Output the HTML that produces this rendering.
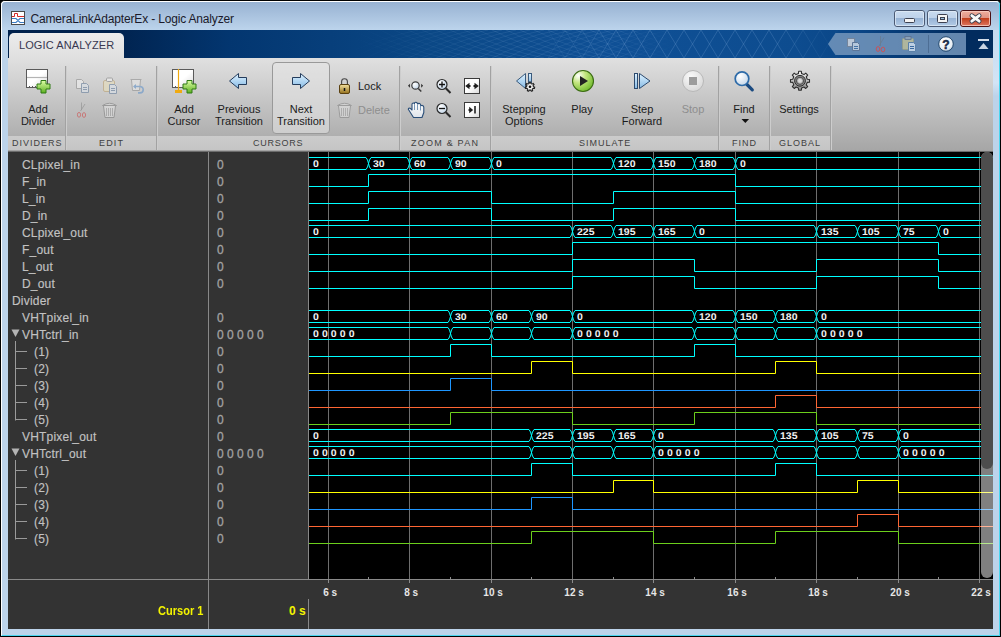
<!DOCTYPE html>
<html><head><meta charset="utf-8">
<style>
*{margin:0;padding:0;box-sizing:border-box}
html,body{width:1001px;height:637px;overflow:hidden;background:#000}
body{position:relative;font-family:"Liberation Sans",sans-serif}
.abs{position:absolute}
#frame{position:absolute;left:0;top:0;width:1001px;height:637px;background:#bcd3ea;border-radius:5px 5px 0 0;
  border-left:1px solid #000;border-top:1px solid #000;border-right:1px solid #000;border-bottom:1px solid #000}
#frame-in{position:absolute;left:0;top:0;right:0;bottom:0;border-left:1px solid #fff;border-top:1px solid #fff;border-right:1px solid #4ad6f0;border-bottom:1px solid #4ad6f0;border-radius:4px 4px 0 0}
#titlebar{position:absolute;left:2px;top:2px;width:997px;height:28px;background:linear-gradient(#98b2d2,#bcd4ec);border-radius:4px 4px 0 0}
#title{position:absolute;left:30.5px;top:12px;font-size:12px;letter-spacing:-0.17px;color:#1a1a2a;white-space:nowrap}
#ribbon{position:absolute;left:8px;top:30px;width:985px;height:28px;background:linear-gradient(90deg,#00214c 0%,#00234f 11%,#033670 22.5%,#0b4886 43%,#0f5096 61%,#0d4c8f 80%,#0a4687 86%,#022c5e 97%);overflow:hidden}
#tab{position:absolute;left:9px;top:33px;width:115px;height:25px;background:linear-gradient(#ececec,#e0e0e0);border-radius:5px 5px 0 0}
#tab span{position:absolute;left:10px;top:6px;font-size:11px;letter-spacing:0.1px;color:#383850;white-space:nowrap}
#toolbar{position:absolute;left:8px;top:58px;width:985px;height:94px;background:linear-gradient(#e0e0e0,#a5a5a5)}
#tb-sec{position:absolute;left:8px;top:58px;width:822px;height:78px;background:linear-gradient(#e3e3e3,#bdbdbd)}
#band{position:absolute;left:8px;top:136px;width:822px;height:14px;background:linear-gradient(#cccccc,#c5c5c5)}
.sep{position:absolute;top:66px;width:2px;height:84px;border-left:1px solid #a2a2a2;border-right:1px solid #cdcdcd}
.lbl{position:absolute;top:137.5px;font-size:9px;letter-spacing:1px;color:#404040;white-space:nowrap}
.btxt{position:absolute;font-size:11px;color:#1b1b1b;text-align:center;line-height:12px;white-space:nowrap}
.dis{color:#8e8e8e}
#panel{position:absolute;left:8px;top:152px;width:985px;height:477px;background:#333333}
#wave{position:absolute;left:309px;top:152px;width:684px;height:427px;background:#000}
.nm{position:absolute;font-size:12px;letter-spacing:0.2px;color:#c2c2c2;-webkit-text-stroke:0.15px #c2c2c2;white-space:nowrap;line-height:14px}
.vl{position:absolute;left:217px;font-size:12px;color:#a2a2a2;-webkit-text-stroke:0.3px #a2a2a2;white-space:nowrap;line-height:14px}
svg{position:absolute;left:0;top:0}
</style></head><body>
<div id="frame"><div id="frame-in"></div></div>
<div id="titlebar"></div>
<div class="abs" style="left:993px;top:30px;width:6px;height:66px;background:linear-gradient(#c4daf0,#d2e4f6 80%,#bcd3ea)"></div>
<div id="title">CameraLinkAdapterEx - Logic Analyzer</div>
<div id="ribbon"><svg width="985" height="28" style="position:absolute;left:0;top:0"><defs><linearGradient id="rm" x1="0" x2="985" gradientUnits="userSpaceOnUse"><stop offset="0.52" stop-color="#fff" stop-opacity="0"/><stop offset="0.62" stop-color="#fff" stop-opacity="1"/><stop offset="0.78" stop-color="#fff" stop-opacity="1"/><stop offset="0.85" stop-color="#fff" stop-opacity="0"/></linearGradient><linearGradient id="rm2" x1="0" x2="985" gradientUnits="userSpaceOnUse"><stop offset="0.34" stop-color="#fff" stop-opacity="0"/><stop offset="0.50" stop-color="#fff" stop-opacity="1"/><stop offset="0.60" stop-color="#fff" stop-opacity="1"/><stop offset="0.68" stop-color="#fff" stop-opacity="0"/></linearGradient><mask id="rmask"><rect width="985" height="28" fill="url(#rm)"/></mask><mask id="rmask2"><rect width="985" height="28" fill="url(#rm2)"/></mask></defs><g mask="url(#rmask)" stroke="#b0d0f8" stroke-opacity="0.20" stroke-width="0.9" fill="none"><path d="M540,28 L557,0" /><path d="M540,0 L557,28" /><path d="M557,28 L574,0" /><path d="M557,0 L574,28" /><path d="M574,28 L591,0" /><path d="M574,0 L591,28" /><path d="M591,28 L608,0" /><path d="M591,0 L608,28" /><path d="M608,28 L625,0" /><path d="M608,0 L625,28" /><path d="M625,28 L642,0" /><path d="M625,0 L642,28" /><path d="M642,28 L659,0" /><path d="M642,0 L659,28" /><path d="M659,28 L676,0" /><path d="M659,0 L676,28" /><path d="M676,28 L693,0" /><path d="M676,0 L693,28" /><path d="M693,28 L710,0" /><path d="M693,0 L710,28" /><path d="M710,28 L727,0" /><path d="M710,0 L727,28" /><path d="M727,28 L744,0" /><path d="M727,0 L744,28" /><path d="M744,28 L761,0" /><path d="M744,0 L761,28" /><path d="M761,28 L778,0" /><path d="M761,0 L778,28" /><path d="M778,28 L795,0" /><path d="M778,0 L795,28" /><path d="M795,28 L812,0" /><path d="M795,0 L812,28" /><path d="M812,28 L829,0" /><path d="M812,0 L829,28" /><path d="M829,28 L846,0" /><path d="M829,0 L846,28" /><path d="M846,28 L863,0" /><path d="M846,0 L863,28" /></g><g mask="url(#rmask2)" stroke="#b0d0f8" stroke-opacity="0.12" stroke-width="0.8" fill="none"><path d="M330,28 Q370,8 410,0" /><path d="M330,0 Q370,20 410,28" /><path d="M344,28 Q384,8 424,0" /><path d="M344,0 Q384,20 424,28" /><path d="M358,28 Q398,8 438,0" /><path d="M358,0 Q398,20 438,28" /><path d="M372,28 Q412,8 452,0" /><path d="M372,0 Q412,20 452,28" /><path d="M386,28 Q426,8 466,0" /><path d="M386,0 Q426,20 466,28" /><path d="M400,28 Q440,8 480,0" /><path d="M400,0 Q440,20 480,28" /><path d="M414,28 Q454,8 494,0" /><path d="M414,0 Q454,20 494,28" /><path d="M428,28 Q468,8 508,0" /><path d="M428,0 Q468,20 508,28" /><path d="M442,28 Q482,8 522,0" /><path d="M442,0 Q482,20 522,28" /><path d="M456,28 Q496,8 536,0" /><path d="M456,0 Q496,20 536,28" /><path d="M470,28 Q510,8 550,0" /><path d="M470,0 Q510,20 550,28" /><path d="M484,28 Q524,8 564,0" /><path d="M484,0 Q524,20 564,28" /><path d="M498,28 Q538,8 578,0" /><path d="M498,0 Q538,20 578,28" /><path d="M512,28 Q552,8 592,0" /><path d="M512,0 Q552,20 592,28" /><path d="M526,28 Q566,8 606,0" /><path d="M526,0 Q566,20 606,28" /><path d="M540,28 Q580,8 620,0" /><path d="M540,0 Q580,20 620,28" /><path d="M554,28 Q594,8 634,0" /><path d="M554,0 Q594,20 634,28" /><path d="M568,28 Q608,8 648,0" /><path d="M568,0 Q608,20 648,28" /><path d="M582,28 Q622,8 662,0" /><path d="M582,0 Q622,20 662,28" /><path d="M596,28 Q636,8 676,0" /><path d="M596,0 Q636,20 676,28" /><path d="M610,28 Q650,8 690,0" /><path d="M610,0 Q650,20 690,28" /><path d="M624,28 Q664,8 704,0" /><path d="M624,0 Q664,20 704,28" /><path d="M638,28 Q678,8 718,0" /><path d="M638,0 Q678,20 718,28" /><path d="M652,28 Q692,8 732,0" /><path d="M652,0 Q692,20 732,28" /><path d="M666,28 Q706,8 746,0" /><path d="M666,0 Q706,20 746,28" /><path d="M680,28 Q720,8 760,0" /><path d="M680,0 Q720,20 760,28" /><path d="M694,28 Q734,8 774,0" /><path d="M694,0 Q734,20 774,28" /><path d="M708,28 Q748,8 788,0" /><path d="M708,0 Q748,20 788,28" /><path d="M722,28 Q762,8 802,0" /><path d="M722,0 Q762,20 802,28" /><path d="M736,28 Q776,8 816,0" /><path d="M736,0 Q776,20 816,28" /></g></svg></div>
<div id="tab"><span>LOGIC ANALYZER</span></div>
<div id="toolbar"></div>
<div id="band"></div>
<div class="sep" style="left:65px"></div>
<div class="sep" style="left:156px"></div>
<div class="sep" style="left:399px"></div>
<div class="sep" style="left:490px"></div>
<div class="sep" style="left:718px"></div>
<div class="sep" style="left:769px"></div>
<div class="sep" style="left:830px"></div>
<svg width="1001" height="637" style="position:absolute;left:0;top:0">
<defs>
<linearGradient id="gGreen" x1="0" y1="0" x2="0" y2="1"><stop offset="0" stop-color="#e0ffa8"/><stop offset="1" stop-color="#5cb020"/></linearGradient>
<linearGradient id="gBox" x1="0" y1="0" x2="1" y2="1"><stop offset="0.5" stop-color="#ffffff"/><stop offset="1" stop-color="#d8d8d8"/></linearGradient>
<linearGradient id="gArrow" x1="0" y1="0" x2="0" y2="1"><stop offset="0" stop-color="#dff2ff"/><stop offset="1" stop-color="#86bbe6"/></linearGradient>
<linearGradient id="gGold" x1="0" y1="0" x2="0" y2="1"><stop offset="0" stop-color="#f4e2a0"/><stop offset="1" stop-color="#94701c"/></linearGradient>
<radialGradient id="gPlay" cx="0.28" cy="0.25" r="0.85"><stop offset="0" stop-color="#ffffff"/><stop offset="0.4" stop-color="#c4e680"/><stop offset="1" stop-color="#6cb828"/></radialGradient>
<radialGradient id="gStop" cx="0.4" cy="0.3" r="0.8"><stop offset="0" stop-color="#fafafa"/><stop offset="1" stop-color="#d4d4d4"/></radialGradient>
<radialGradient id="gLens" cx="0.35" cy="0.3" r="0.8"><stop offset="0" stop-color="#ffffff"/><stop offset="1" stop-color="#c0d4e8"/></radialGradient>
<radialGradient id="gHelp" cx="0.4" cy="0.3" r="0.8"><stop offset="0" stop-color="#ffffff"/><stop offset="0.7" stop-color="#e8eef4"/><stop offset="1" stop-color="#9fb4c8"/></radialGradient>
<linearGradient id="gMin" x1="0" y1="0" x2="0" y2="1"><stop offset="0" stop-color="#cadcf0"/><stop offset="0.47" stop-color="#bed2ea"/><stop offset="0.5" stop-color="#98b4d6"/><stop offset="1" stop-color="#b4cce6"/></linearGradient>
<linearGradient id="gClose" x1="0" y1="0" x2="0" y2="1"><stop offset="0" stop-color="#f0b0a0"/><stop offset="0.47" stop-color="#e09484"/><stop offset="0.5" stop-color="#c2401e"/><stop offset="1" stop-color="#e07a64"/></linearGradient>
<linearGradient id="gGear" x1="0" y1="0" x2="0" y2="1"><stop offset="0" stop-color="#f4f4f4"/><stop offset="1" stop-color="#8a8a8a"/></linearGradient>
<linearGradient id="gHand" x1="0" y1="0" x2="0" y2="1"><stop offset="0" stop-color="#ffffff"/><stop offset="1" stop-color="#dfe4ea"/></linearGradient>
</defs>
<!-- title icon -->
<rect x="11.5" y="11.5" width="13" height="13" fill="#fff" stroke="#4a4a4a"/>
<path d="M12,16.5 H14.5 V13.5 H17.5 V16.5 H24" fill="none" stroke="#d42a2a"/>
<path d="M12,18.5 H16 L18,20.5 L20,18.5 H24 M12,22.5 H16 L18,20.5 L20,22.5 H24" fill="none" stroke="#3a7cc4" stroke-width="1.1"/>
<!-- window buttons -->
<rect x="894.5" y="10.5" width="30" height="16" rx="2.5" fill="url(#gMin)" stroke="#4b5a74"/>
<rect x="895.5" y="11.5" width="28" height="14" rx="1.5" fill="none" stroke="#e4eef8" stroke-opacity="0.7"/>
<rect x="904.5" y="18.5" width="10" height="4" rx="1" fill="#f4f4f4" stroke="#3c4050"/>
<rect x="927.5" y="10.5" width="30" height="16" rx="2.5" fill="url(#gMin)" stroke="#4b5a74"/>
<rect x="928.5" y="11.5" width="28" height="14" rx="1.5" fill="none" stroke="#e4eef8" stroke-opacity="0.7"/>
<rect x="937.5" y="14.5" width="10" height="8" rx="1" fill="#f4f4f4" stroke="#3c4050"/>
<rect x="940.5" y="17.5" width="4" height="2" fill="#9cc0dc" stroke="#3c4050"/>
<rect x="960.5" y="10.5" width="30" height="16" rx="2.5" fill="url(#gClose)" stroke="#4a1014"/>
<rect x="961.5" y="11.5" width="28" height="14" rx="1.5" fill="none" stroke="#f8d0c4" stroke-opacity="0.8"/>
<path d="M971.8,15.6 L979.2,21.2 M979.2,15.6 L971.8,21.2" stroke="#3a4050" stroke-width="4.6" stroke-linecap="round"/>
<path d="M971.8,15.6 L979.2,21.2 M979.2,15.6 L971.8,21.2" stroke="#f8f8f8" stroke-width="2.8" stroke-linecap="round"/>
<!-- QAT -->
<path d="M828,44 L835.5,33 H966 V55 H835.5 Z" fill="#7496bc" fill-opacity="0.85"/>
<g opacity="0.75">
<rect x="847.5" y="38.5" width="7" height="8" fill="#d8dde4" stroke="#7a8494"/>
<path d="M852.5,42.5 h5 l2,2 v6 h-7 z" fill="#d0dce8" stroke="#5a7090"/>
<path d="M854,46.5 h4 M854,48.5 h4" stroke="#3a6aa0"/>
</g>
<path d="M884,37.5 L879,46 M880.5,36 V46" stroke="#6a7c90" stroke-width="0.8"/>
<ellipse cx="878" cy="49" rx="1.8" ry="2.4" fill="none" stroke="#c8545a"/>
<ellipse cx="883" cy="49.5" rx="1.8" ry="2.4" fill="none" stroke="#c8545a"/>
<rect x="902.5" y="38.5" width="11" height="11" rx="1" fill="#b8bc9c" stroke="#98a088" opacity="0.9"/>
<rect x="905" y="36.5" width="6" height="3" fill="#8aa0b8" stroke="#5a7090" stroke-width="0.8"/>
<path d="M908.5,42.5 h5 l2,2 v7 h-7 z" fill="#bcd0e4" stroke="#5a80a8"/>
<path d="M910,46.5 h4 M910,48.5 h4" stroke="#3a6aa0"/>
<path d="M928.5,35 V53" stroke="#4d6e94"/>
<circle cx="946" cy="44" r="7.3" fill="url(#gHelp)" stroke="#22486e"/>
<text x="946" y="48.5" text-anchor="middle" font-family="Liberation Sans" font-weight="bold" font-size="12" fill="#1a2a48" stroke="#1a2a48" stroke-width="0.5">?</text>
<!-- collapse -->
<rect x="978" y="39" width="11" height="2" fill="#d4dde8"/>
<path d="M978.5,49 L983.5,43 L988.5,49 Z" fill="#c8d4e2"/>

<!-- Add divider -->
<rect x="26.5" y="69.5" width="21" height="18" fill="url(#gBox)" stroke="#5a5a5a"/>
<path d="M27,77.5 H47" stroke="#b4b4b4" stroke-width="1.2"/>
<path d="M29.5,86 v1 M32.5,86 v1 M35.5,86 v1" stroke="#5a5a5a"/>
<path d="M41,80.5 h5 v3.5 h4 v5 h-4 v4 h-5 v-4 h-4 v-5 h4 z" fill="url(#gGreen)" stroke="#2e7a14"/>
<!-- edit icons (disabled) -->
<g opacity="0.55">
<path d="M76.5,79.5 h5 l2,2 v7 h-7 z" fill="#f2f2f2" stroke="#8a8a8a"/>
<path d="M81.5,83.5 h5 l2,2 v7 h-7 z" fill="#dde4ec" stroke="#5e7898"/>
<path d="M83,87.5 h4 M83,89.5 h4" stroke="#5e7898"/>
<rect x="103.5" y="80.5" width="11" height="11" rx="1.5" fill="#eae0b8" stroke="#b89c68"/>
<rect x="106.5" y="78" width="6" height="3.5" rx="1" fill="#f4f4f4" stroke="#7a7a7a"/>
<path d="M109.5,84.5 h5 l2,2 v7 h-7 z" fill="#dde4ec" stroke="#5e7898"/>
<path d="M111,88.5 h4 M111,90.5 h4" stroke="#5e7898"/>
<path d="M130.5,79.5 h11 M131.5,80 l1,10.5 h7 l1,-10.5" fill="#e8e8e8" stroke="#8a8a8a"/>
<path d="M134,86.5 h6 a3.2,3.2 0 0 1 0,6.4 h-2" fill="none" stroke="#5a8ec8" stroke-width="1.6"/>
<path d="M133,86.5 l3,-2.5 v5 z" fill="#5a8ec8"/>
<path d="M81.5,102.5 V110 M85,104 L80.5,111" stroke="#7a7a7a" stroke-width="0.8"/>
<ellipse cx="79" cy="114.8" rx="1.6" ry="2.4" fill="none" stroke="#d04040"/>
<ellipse cx="84" cy="115" rx="1.6" ry="2.4" fill="none" stroke="#d04040"/>
<path d="M102.5,105.5 Q109.5,101 116.5,105.5 Z" fill="#e0e0e0" stroke="#7a7a7a"/>
<path d="M103.5,106 l1.5,11.5 h9 l1.5,-11.5" fill="#e4e4e4" stroke="#7a7a7a"/>
<path d="M106.5,108 v8 M108.5,108 v8 M110.5,108 v8 M112.5,108 v8" stroke="#8a8a8a" stroke-width="0.8"/>
</g>
<!-- Add cursor -->
<rect x="172.5" y="69.5" width="21" height="18" fill="url(#gBox)" stroke="#5a5a5a"/>
<path d="M175.5,86 v1 M189.5,86 v1" stroke="#5a5a5a"/>
<path d="M178.5,69 V90" stroke="#f0aa10" stroke-width="1.2"/>
<rect x="175" y="90" width="7" height="3" fill="#f0aa10"/>
<path d="M187,80.5 h5 v3.5 h4 v5 h-4 v4 h-5 v-4 h-4 v-5 h4 z" fill="url(#gGreen)" stroke="#2e7a14"/>
<!-- prev / next arrows -->
<path d="M229.5,81 L238.5,73.5 V77.5 H246.5 V84.5 H238.5 V88.5 Z" fill="url(#gArrow)" stroke="#243c5c" stroke-linejoin="miter"/>
<rect x="272.5" y="62.5" width="57" height="71" rx="3.5" fill="#e6e6e6" fill-opacity="0.55" stroke="#999"/>
<path d="M309.5,81 L300.5,73.5 V77.5 H292.5 V84.5 H300.5 V88.5 Z" fill="url(#gArrow)" stroke="#243c5c"/>
<!-- lock -->
<path d="M341.6,84.5 V81.6 a2.9,2.9 0 0 1 5.8,0 V84.5" fill="none" stroke="#454545" stroke-width="1.1"/>
<rect x="339.5" y="84.5" width="10" height="9" rx="1.5" fill="url(#gGold)" stroke="#5a4010"/>
<path d="M344.5,88 v3" stroke="#111" stroke-width="1.5"/>
<!-- delete disabled -->
<g opacity="0.5">
<path d="M337.5,105.5 Q344.5,101 351.5,105.5 Z" fill="#e0e0e0" stroke="#7a7a7a"/>
<path d="M338.5,106 l1.5,11.5 h9 l1.5,-11.5" fill="#e4e4e4" stroke="#7a7a7a"/>
<path d="M341.5,108 v8 M343.5,108 v8 M345.5,108 v8 M347.5,108 v8" stroke="#8a8a8a" stroke-width="0.8"/>
</g>
<!-- zoom x -->
<circle cx="415.5" cy="85.5" r="3.7" fill="url(#gLens)" stroke="#3e3e3e" stroke-width="1.2"/>
<path d="M418.3,88.5 L421.3,91.6" stroke="#3a3a3a" stroke-width="1.5"/>
<path d="M408,85.7 L409.9,83.7 V87.7 Z M423.1,85.7 L421.2,83.7 V87.7 Z" fill="#2a2a2a"/>
<!-- zoom in -->
<circle cx="442" cy="84.5" r="5" fill="url(#gLens)" stroke="#2a2a2a" stroke-width="1.2"/>
<path d="M445.8,88.3 L450.5,93" stroke="#2a2a2a" stroke-width="2"/>
<path d="M439,84.5 h6 M442,81.5 v6" stroke="#111" stroke-width="1.3"/>
<!-- fit -->
<rect x="464.5" y="78.5" width="15" height="15" fill="url(#gBox)" stroke="#3a3a3a"/>
<path d="M465.2,86 L469.5,82.8 V89.2 Z M478.8,86 L474.5,82.8 V89.2 Z" fill="#1e1e1e"/>
<path d="M468,86 h2.5 M473.5,86 h2.5" stroke="#1e1e1e" stroke-width="1.8"/>
<!-- hand -->
<path d="M413.5,117.5 L408.3,109.3 Q408.5,107.9 410,108.2 L412,110 V104.5 Q412,102.8 413.5,103 Q414.3,103.2 414.5,104 V102.8 Q415.5,101.8 416.7,102.5 Q417.3,103 417.5,104 Q418.5,103 419.8,103.5 L420.5,104.5 V105.8 Q421.8,105 423,105.7 Q423.8,106.3 423.8,107.5 V112.5 L422,117.5 Z" fill="url(#gHand)" stroke="#2a4e78" stroke-width="1.1" stroke-linejoin="round"/>
<path d="M414.5,104.5 V110 M417.5,104.5 V110 M420.5,105.5 V110.5" stroke="#6a8cb0" stroke-width="0.9"/>
<!-- zoom out -->
<circle cx="442" cy="108.5" r="5" fill="url(#gLens)" stroke="#2a2a2a" stroke-width="1.2"/>
<path d="M445.8,112.3 L450.5,117" stroke="#2a2a2a" stroke-width="2"/>
<path d="M439,108.5 h6" stroke="#111" stroke-width="1.3"/>
<!-- fit end -->
<rect x="464.5" y="102.5" width="15" height="15" fill="url(#gBox)" stroke="#3a3a3a"/>
<path d="M468.5,110 h2.5" stroke="#1e1e1e" stroke-width="1.8"/>
<path d="M473.2,110 L469.2,106.8 V113.2 Z" fill="#1e1e1e"/>
<path d="M475,106 V113.6" stroke="#1e1e1e" stroke-width="1.6"/>
<!-- stepping options -->
<path d="M516.5,81 L525.5,73.5 V88.5 Z" fill="url(#gArrow)" stroke="#3a5a7c"/>
<rect x="528.5" y="73.5" width="3" height="9" fill="url(#gArrow)" stroke="#3a5a7c"/>
<path d="M529.17,83.50 L529.26,82.16 L530.74,82.16 L530.83,83.50 L532.06,84.09 L533.17,83.33 L534.09,84.48 L533.10,85.39 L533.40,86.72 L534.69,87.12 L534.36,88.55 L533.03,88.34 L532.18,89.41 L532.68,90.66 L531.35,91.30 L530.68,90.13 L529.32,90.13 L528.65,91.30 L527.32,90.66 L527.82,89.41 L526.97,88.34 L525.64,88.55 L525.31,87.12 L526.60,86.72 L526.90,85.39 L525.91,84.48 L526.83,83.33 L527.94,84.09 Z" fill="#f0f0f0" stroke="#222" stroke-width="1.1" stroke-linejoin="round"/>
<circle cx="530" cy="86.8" r="1.3" fill="#111"/>
<!-- play -->
<circle cx="583" cy="81" r="10.5" fill="url(#gPlay)" stroke="#3c6c14" stroke-width="1.1"/>
<path d="M580,76 L588,81 L580,86 Z" fill="#222"/>
<!-- step forward -->
<rect x="634.5" y="73.5" width="3" height="15" fill="url(#gArrow)" stroke="#2c4a6e"/>
<path d="M639.5,73.5 L650,81 L639.5,88.5 Z" fill="url(#gArrow)" stroke="#2c4a6e"/>
<!-- stop -->
<circle cx="693" cy="81" r="10.5" fill="url(#gStop)" stroke="#b8b8b8"/>
<rect x="689" y="77" width="8" height="8" fill="#9c9c9c"/>
<!-- find -->
<path d="M746.5,84 L752.3,89.8" stroke="#1a4a80" stroke-width="3.2" stroke-linecap="round"/>
<circle cx="742" cy="78.7" r="6.8" fill="url(#gLens)" stroke="#2c6aa8" stroke-width="1.7"/>
<path d="M745.3,123 l-3.8,-4 h7.6 z" fill="#111"/>
<!-- settings -->
<path d="M798.41,73.57 L798.65,71.30 L801.35,71.30 L801.59,73.57 L803.99,74.57 L805.76,73.12 L807.68,75.04 L806.23,76.81 L807.23,79.21 L809.50,79.45 L809.50,82.15 L807.23,82.39 L806.23,84.79 L807.68,86.56 L805.76,88.48 L803.99,87.03 L801.59,88.03 L801.35,90.30 L798.65,90.30 L798.41,88.03 L796.01,87.03 L794.24,88.48 L792.32,86.56 L793.77,84.79 L792.77,82.39 L790.50,82.15 L790.50,79.45 L792.77,79.21 L793.77,76.81 L792.32,75.04 L794.24,73.12 L796.01,74.57 Z" fill="url(#gGear)" stroke="#2e2e2e" stroke-width="1.1" stroke-linejoin="round"/>
<circle cx="800" cy="80.8" r="5.4" fill="#8a8a8a" stroke="#2a2a2a" stroke-width="1"/>
<circle cx="800" cy="80.8" r="3.6" fill="#b0b0b0" stroke="#4a4a4a" stroke-width="1"/>
<circle cx="800" cy="80.8" r="2" fill="#dcdcdc"/>
</svg>

<div class="lbl" style="left:12px">DIVIDERS</div>
<div class="lbl" style="left:99px;letter-spacing:1.15px">EDIT</div>
<div class="lbl" style="left:253px;letter-spacing:0.77px">CURSORS</div>
<div class="lbl" style="left:411px;letter-spacing:1.23px">ZOOM &amp; PAN</div>
<div class="lbl" style="left:579px">SIMULATE</div>
<div class="lbl" style="left:732px">FIND</div>
<div class="lbl" style="left:779px">GLOBAL</div>

<div class="btxt" style="left:15px;top:103px;width:46px">Add<br>Divider</div>
<div class="btxt" style="left:160px;top:103px;width:48px">Add<br>Cursor</div>
<div class="btxt" style="left:211px;top:103px;width:56px">Previous<br>Transition</div>
<div class="btxt" style="left:272px;top:103px;width:58px">Next<br>Transition</div>
<div class="btxt" style="left:358px;top:80px">Lock</div>
<div class="btxt dis" style="left:358px;top:104px">Delete</div>
<div class="btxt" style="left:496px;top:103px;width:56px">Stepping<br>Options</div>
<div class="btxt" style="left:562px;top:103px;width:40px">Play</div>
<div class="btxt" style="left:614px;top:103px;width:56px">Step<br>Forward</div>
<div class="btxt dis" style="left:673px;top:103px;width:40px">Stop</div>
<div class="btxt" style="left:724px;top:103px;width:40px">Find</div>
<div class="btxt" style="left:774px;top:103px;width:50px">Settings</div>

<div id="panel"></div>
<div class="abs" style="left:8px;top:150px;width:985px;height:1px;background:#a4a4a4"></div>
<div class="abs" style="left:8px;top:151px;width:985px;height:1px;background:#6c6c6c"></div>
<div id="wave"></div>
<svg width="1001" height="637" style="shape-rendering:crispEdges">
<g fill="none" stroke-width="1">
<path d="M328.5,152 V579" stroke="#6e6e6e"/>
<path d="M409.5,152 V579" stroke="#6e6e6e"/>
<path d="M491.5,152 V579" stroke="#6e6e6e"/>
<path d="M572.5,152 V579" stroke="#6e6e6e"/>
<path d="M653.5,152 V579" stroke="#6e6e6e"/>
<path d="M735.5,152 V579" stroke="#6e6e6e"/>
<path d="M816.5,152 V579" stroke="#6e6e6e"/>
<path d="M898.5,152 V579" stroke="#6e6e6e"/>
<path d="M979.5,152 V579" stroke="#6e6e6e"/>
</g>
</svg>
<svg width="1001" height="637">
<g fill="none" stroke-width="1" font-family="Liberation Sans" font-size="10" font-weight="bold" style="fill:none">
<path d="M309,157.5 H366 M309,169.5 H366" stroke="#00ffff"/>
<text transform="translate(313,167) scale(1.05,0.97)" font-size="10" text-rendering="geometricPrecision" fill="#f0f0f0" stroke="none" xml:space="preserve">0</text>
<path d="M371,157.5 H407 M371,169.5 H407" stroke="#00ffff"/>
<text transform="translate(373,167) scale(1.05,0.97)" font-size="10" text-rendering="geometricPrecision" fill="#f0f0f0" stroke="none" xml:space="preserve">30</text>
<path d="M412,157.5 H448 M412,169.5 H448" stroke="#00ffff"/>
<text transform="translate(414,167) scale(1.05,0.97)" font-size="10" text-rendering="geometricPrecision" fill="#f0f0f0" stroke="none" xml:space="preserve">60</text>
<path d="M453,157.5 H489 M453,169.5 H489" stroke="#00ffff"/>
<text transform="translate(455,167) scale(1.05,0.97)" font-size="10" text-rendering="geometricPrecision" fill="#f0f0f0" stroke="none" xml:space="preserve">90</text>
<path d="M494,157.5 H611 M494,169.5 H611" stroke="#00ffff"/>
<text transform="translate(496,167) scale(1.05,0.97)" font-size="10" text-rendering="geometricPrecision" fill="#f0f0f0" stroke="none" xml:space="preserve">0</text>
<path d="M616,157.5 H651 M616,169.5 H651" stroke="#00ffff"/>
<text transform="translate(618,167) scale(1.05,0.97)" font-size="10" text-rendering="geometricPrecision" fill="#f0f0f0" stroke="none" xml:space="preserve">120</text>
<path d="M656,157.5 H692 M656,169.5 H692" stroke="#00ffff"/>
<text transform="translate(658,167) scale(1.05,0.97)" font-size="10" text-rendering="geometricPrecision" fill="#f0f0f0" stroke="none" xml:space="preserve">150</text>
<path d="M697,157.5 H733 M697,169.5 H733" stroke="#00ffff"/>
<text transform="translate(699,167) scale(1.05,0.97)" font-size="10" text-rendering="geometricPrecision" fill="#f0f0f0" stroke="none" xml:space="preserve">180</text>
<path d="M738,157.5 H993 M738,169.5 H993" stroke="#00ffff"/>
<text transform="translate(740,167) scale(1.05,0.97)" font-size="10" text-rendering="geometricPrecision" fill="#f0f0f0" stroke="none" xml:space="preserve">0</text>
<path d="M366,157.5 L367.5,160 L369.5,167 L371,169.5 M371,157.5 L369.5,160 L367.5,167 L366,169.5" stroke="#00ffff"/>
<path d="M407,157.5 L408.5,160 L410.5,167 L412,169.5 M412,157.5 L410.5,160 L408.5,167 L407,169.5" stroke="#00ffff"/>
<path d="M448,157.5 L449.5,160 L451.5,167 L453,169.5 M453,157.5 L451.5,160 L449.5,167 L448,169.5" stroke="#00ffff"/>
<path d="M489,157.5 L490.5,160 L492.5,167 L494,169.5 M494,157.5 L492.5,160 L490.5,167 L489,169.5" stroke="#00ffff"/>
<path d="M611,157.5 L612.5,160 L614.5,167 L616,169.5 M616,157.5 L614.5,160 L612.5,167 L611,169.5" stroke="#00ffff"/>
<path d="M651,157.5 L652.5,160 L654.5,167 L656,169.5 M656,157.5 L654.5,160 L652.5,167 L651,169.5" stroke="#00ffff"/>
<path d="M692,157.5 L693.5,160 L695.5,167 L697,169.5 M697,157.5 L695.5,160 L693.5,167 L692,169.5" stroke="#00ffff"/>
<path d="M733,157.5 L734.5,160 L736.5,167 L738,169.5 M738,157.5 L736.5,160 L734.5,167 L733,169.5" stroke="#00ffff"/>
<polyline points="309,186.5 368.5,186.5 368.5,174.5 735.5,174.5 735.5,186.5 993,186.5" stroke="#00ffff"/>
<polyline points="309,203.5 368.5,203.5 368.5,191.5 491.5,191.5 491.5,203.5 613.5,203.5 613.5,191.5 735.5,191.5 735.5,203.5 993,203.5" stroke="#00ffff"/>
<polyline points="309,220.5 368.5,220.5 368.5,208.5 491.5,208.5 491.5,220.5 613.5,220.5 613.5,208.5 735.5,208.5 735.5,220.5 993,220.5" stroke="#00ffff"/>
<path d="M309,225.5 H570 M309,237.5 H570" stroke="#00ffff"/>
<text transform="translate(313,235) scale(1.05,0.97)" font-size="10" text-rendering="geometricPrecision" fill="#f0f0f0" stroke="none" xml:space="preserve">0</text>
<path d="M575,225.5 H611 M575,237.5 H611" stroke="#00ffff"/>
<text transform="translate(577,235) scale(1.05,0.97)" font-size="10" text-rendering="geometricPrecision" fill="#f0f0f0" stroke="none" xml:space="preserve">225</text>
<path d="M616,225.5 H651 M616,237.5 H651" stroke="#00ffff"/>
<text transform="translate(618,235) scale(1.05,0.97)" font-size="10" text-rendering="geometricPrecision" fill="#f0f0f0" stroke="none" xml:space="preserve">195</text>
<path d="M656,225.5 H692 M656,237.5 H692" stroke="#00ffff"/>
<text transform="translate(658,235) scale(1.05,0.97)" font-size="10" text-rendering="geometricPrecision" fill="#f0f0f0" stroke="none" xml:space="preserve">165</text>
<path d="M697,225.5 H814 M697,237.5 H814" stroke="#00ffff"/>
<text transform="translate(699,235) scale(1.05,0.97)" font-size="10" text-rendering="geometricPrecision" fill="#f0f0f0" stroke="none" xml:space="preserve">0</text>
<path d="M819,225.5 H855 M819,237.5 H855" stroke="#00ffff"/>
<text transform="translate(821,235) scale(1.05,0.97)" font-size="10" text-rendering="geometricPrecision" fill="#f0f0f0" stroke="none" xml:space="preserve">135</text>
<path d="M860,225.5 H896 M860,237.5 H896" stroke="#00ffff"/>
<text transform="translate(862,235) scale(1.05,0.97)" font-size="10" text-rendering="geometricPrecision" fill="#f0f0f0" stroke="none" xml:space="preserve">105</text>
<path d="M901,225.5 H936 M901,237.5 H936" stroke="#00ffff"/>
<text transform="translate(903,235) scale(1.05,0.97)" font-size="10" text-rendering="geometricPrecision" fill="#f0f0f0" stroke="none" xml:space="preserve">75</text>
<path d="M941,225.5 H993 M941,237.5 H993" stroke="#00ffff"/>
<text transform="translate(943,235) scale(1.05,0.97)" font-size="10" text-rendering="geometricPrecision" fill="#f0f0f0" stroke="none" xml:space="preserve">0</text>
<path d="M570,225.5 L571.5,228 L573.5,235 L575,237.5 M575,225.5 L573.5,228 L571.5,235 L570,237.5" stroke="#00ffff"/>
<path d="M611,225.5 L612.5,228 L614.5,235 L616,237.5 M616,225.5 L614.5,228 L612.5,235 L611,237.5" stroke="#00ffff"/>
<path d="M651,225.5 L652.5,228 L654.5,235 L656,237.5 M656,225.5 L654.5,228 L652.5,235 L651,237.5" stroke="#00ffff"/>
<path d="M692,225.5 L693.5,228 L695.5,235 L697,237.5 M697,225.5 L695.5,228 L693.5,235 L692,237.5" stroke="#00ffff"/>
<path d="M814,225.5 L815.5,228 L817.5,235 L819,237.5 M819,225.5 L817.5,228 L815.5,235 L814,237.5" stroke="#00ffff"/>
<path d="M855,225.5 L856.5,228 L858.5,235 L860,237.5 M860,225.5 L858.5,228 L856.5,235 L855,237.5" stroke="#00ffff"/>
<path d="M896,225.5 L897.5,228 L899.5,235 L901,237.5 M901,225.5 L899.5,228 L897.5,235 L896,237.5" stroke="#00ffff"/>
<path d="M936,225.5 L937.5,228 L939.5,235 L941,237.5 M941,225.5 L939.5,228 L937.5,235 L936,237.5" stroke="#00ffff"/>
<polyline points="309,254.5 572.5,254.5 572.5,242.5 938.5,242.5 938.5,254.5 993,254.5" stroke="#00ffff"/>
<polyline points="309,271.5 572.5,271.5 572.5,259.5 694.5,259.5 694.5,271.5 816.5,271.5 816.5,259.5 938.5,259.5 938.5,271.5 993,271.5" stroke="#00ffff"/>
<polyline points="309,288.5 572.5,288.5 572.5,276.5 694.5,276.5 694.5,288.5 816.5,288.5 816.5,276.5 938.5,276.5 938.5,288.5 993,288.5" stroke="#00ffff"/>
<path d="M309,310.5 H448 M309,322.5 H448" stroke="#00ffff"/>
<text transform="translate(313,320) scale(1.05,0.97)" font-size="10" text-rendering="geometricPrecision" fill="#f0f0f0" stroke="none" xml:space="preserve">0</text>
<path d="M453,310.5 H489 M453,322.5 H489" stroke="#00ffff"/>
<text transform="translate(455,320) scale(1.05,0.97)" font-size="10" text-rendering="geometricPrecision" fill="#f0f0f0" stroke="none" xml:space="preserve">30</text>
<path d="M494,310.5 H529 M494,322.5 H529" stroke="#00ffff"/>
<text transform="translate(496,320) scale(1.05,0.97)" font-size="10" text-rendering="geometricPrecision" fill="#f0f0f0" stroke="none" xml:space="preserve">60</text>
<path d="M534,310.5 H570 M534,322.5 H570" stroke="#00ffff"/>
<text transform="translate(536,320) scale(1.05,0.97)" font-size="10" text-rendering="geometricPrecision" fill="#f0f0f0" stroke="none" xml:space="preserve">90</text>
<path d="M575,310.5 H692 M575,322.5 H692" stroke="#00ffff"/>
<text transform="translate(577,320) scale(1.05,0.97)" font-size="10" text-rendering="geometricPrecision" fill="#f0f0f0" stroke="none" xml:space="preserve">0</text>
<path d="M697,310.5 H733 M697,322.5 H733" stroke="#00ffff"/>
<text transform="translate(699,320) scale(1.05,0.97)" font-size="10" text-rendering="geometricPrecision" fill="#f0f0f0" stroke="none" xml:space="preserve">120</text>
<path d="M738,310.5 H773 M738,322.5 H773" stroke="#00ffff"/>
<text transform="translate(740,320) scale(1.05,0.97)" font-size="10" text-rendering="geometricPrecision" fill="#f0f0f0" stroke="none" xml:space="preserve">150</text>
<path d="M778,310.5 H814 M778,322.5 H814" stroke="#00ffff"/>
<text transform="translate(780,320) scale(1.05,0.97)" font-size="10" text-rendering="geometricPrecision" fill="#f0f0f0" stroke="none" xml:space="preserve">180</text>
<path d="M819,310.5 H993 M819,322.5 H993" stroke="#00ffff"/>
<text transform="translate(821,320) scale(1.05,0.97)" font-size="10" text-rendering="geometricPrecision" fill="#f0f0f0" stroke="none" xml:space="preserve">0</text>
<path d="M448,310.5 L449.5,313 L451.5,320 L453,322.5 M453,310.5 L451.5,313 L449.5,320 L448,322.5" stroke="#00ffff"/>
<path d="M489,310.5 L490.5,313 L492.5,320 L494,322.5 M494,310.5 L492.5,313 L490.5,320 L489,322.5" stroke="#00ffff"/>
<path d="M529,310.5 L530.5,313 L532.5,320 L534,322.5 M534,310.5 L532.5,313 L530.5,320 L529,322.5" stroke="#00ffff"/>
<path d="M570,310.5 L571.5,313 L573.5,320 L575,322.5 M575,310.5 L573.5,313 L571.5,320 L570,322.5" stroke="#00ffff"/>
<path d="M692,310.5 L693.5,313 L695.5,320 L697,322.5 M697,310.5 L695.5,313 L693.5,320 L692,322.5" stroke="#00ffff"/>
<path d="M733,310.5 L734.5,313 L736.5,320 L738,322.5 M738,310.5 L736.5,313 L734.5,320 L733,322.5" stroke="#00ffff"/>
<path d="M773,310.5 L774.5,313 L776.5,320 L778,322.5 M778,310.5 L776.5,313 L774.5,320 L773,322.5" stroke="#00ffff"/>
<path d="M814,310.5 L815.5,313 L817.5,320 L819,322.5 M819,310.5 L817.5,313 L815.5,320 L814,322.5" stroke="#00ffff"/>
<path d="M309,327.5 H448 M309,339.5 H448" stroke="#00ffff"/>
<text transform="translate(313,337) scale(1.05,0.97)" font-size="10" text-rendering="geometricPrecision" fill="#f0f0f0" stroke="none" xml:space="preserve" letter-spacing="0.08">0 0 0 0 0</text>
<path d="M453,327.5 H489 M453,339.5 H489" stroke="#00ffff"/>
<path d="M494,327.5 H529 M494,339.5 H529" stroke="#00ffff"/>
<path d="M534,327.5 H570 M534,339.5 H570" stroke="#00ffff"/>
<path d="M575,327.5 H692 M575,339.5 H692" stroke="#00ffff"/>
<text transform="translate(577,337) scale(1.05,0.97)" font-size="10" text-rendering="geometricPrecision" fill="#f0f0f0" stroke="none" xml:space="preserve" letter-spacing="0.08">0 0 0 0 0</text>
<path d="M697,327.5 H733 M697,339.5 H733" stroke="#00ffff"/>
<path d="M738,327.5 H773 M738,339.5 H773" stroke="#00ffff"/>
<path d="M778,327.5 H814 M778,339.5 H814" stroke="#00ffff"/>
<path d="M819,327.5 H993 M819,339.5 H993" stroke="#00ffff"/>
<text transform="translate(821,337) scale(1.05,0.97)" font-size="10" text-rendering="geometricPrecision" fill="#f0f0f0" stroke="none" xml:space="preserve" letter-spacing="0.08">0 0 0 0 0</text>
<path d="M448,327.5 L449.5,330 L451.5,337 L453,339.5 M453,327.5 L451.5,330 L449.5,337 L448,339.5" stroke="#00ffff"/>
<path d="M489,327.5 L490.5,330 L492.5,337 L494,339.5 M494,327.5 L492.5,330 L490.5,337 L489,339.5" stroke="#00ffff"/>
<path d="M529,327.5 L530.5,330 L532.5,337 L534,339.5 M534,327.5 L532.5,330 L530.5,337 L529,339.5" stroke="#00ffff"/>
<path d="M570,327.5 L571.5,330 L573.5,337 L575,339.5 M575,327.5 L573.5,330 L571.5,337 L570,339.5" stroke="#00ffff"/>
<path d="M692,327.5 L693.5,330 L695.5,337 L697,339.5 M697,327.5 L695.5,330 L693.5,337 L692,339.5" stroke="#00ffff"/>
<path d="M733,327.5 L734.5,330 L736.5,337 L738,339.5 M738,327.5 L736.5,330 L734.5,337 L733,339.5" stroke="#00ffff"/>
<path d="M773,327.5 L774.5,330 L776.5,337 L778,339.5 M778,327.5 L776.5,330 L774.5,337 L773,339.5" stroke="#00ffff"/>
<path d="M814,327.5 L815.5,330 L817.5,337 L819,339.5 M819,327.5 L817.5,330 L815.5,337 L814,339.5" stroke="#00ffff"/>
<polyline points="309,356.5 450.5,356.5 450.5,344.5 491.5,344.5 491.5,356.5 694.5,356.5 694.5,344.5 735.5,344.5 735.5,356.5 993,356.5" stroke="#00ffff"/>
<polyline points="309,373.5 531.5,373.5 531.5,361.5 572.5,361.5 572.5,373.5 775.5,373.5 775.5,361.5 816.5,361.5 816.5,373.5 993,373.5" stroke="#ffff00"/>
<polyline points="309,390.5 450.5,390.5 450.5,378.5 491.5,378.5 491.5,390.5 993,390.5" stroke="#1e96ff"/>
<polyline points="309,407.5 775.5,407.5 775.5,395.5 816.5,395.5 816.5,407.5 993,407.5" stroke="#ff6633"/>
<polyline points="309,424.5 450.5,424.5 450.5,412.5 572.5,412.5 572.5,424.5 694.5,424.5 694.5,412.5 816.5,412.5 816.5,424.5 993,424.5" stroke="#6ccf1c"/>
<path d="M309,429.5 H529 M309,441.5 H529" stroke="#00ffff"/>
<text transform="translate(313,439) scale(1.05,0.97)" font-size="10" text-rendering="geometricPrecision" fill="#f0f0f0" stroke="none" xml:space="preserve">0</text>
<path d="M534,429.5 H570 M534,441.5 H570" stroke="#00ffff"/>
<text transform="translate(536,439) scale(1.05,0.97)" font-size="10" text-rendering="geometricPrecision" fill="#f0f0f0" stroke="none" xml:space="preserve">225</text>
<path d="M575,429.5 H611 M575,441.5 H611" stroke="#00ffff"/>
<text transform="translate(577,439) scale(1.05,0.97)" font-size="10" text-rendering="geometricPrecision" fill="#f0f0f0" stroke="none" xml:space="preserve">195</text>
<path d="M616,429.5 H651 M616,441.5 H651" stroke="#00ffff"/>
<text transform="translate(618,439) scale(1.05,0.97)" font-size="10" text-rendering="geometricPrecision" fill="#f0f0f0" stroke="none" xml:space="preserve">165</text>
<path d="M656,429.5 H773 M656,441.5 H773" stroke="#00ffff"/>
<text transform="translate(658,439) scale(1.05,0.97)" font-size="10" text-rendering="geometricPrecision" fill="#f0f0f0" stroke="none" xml:space="preserve">0</text>
<path d="M778,429.5 H814 M778,441.5 H814" stroke="#00ffff"/>
<text transform="translate(780,439) scale(1.05,0.97)" font-size="10" text-rendering="geometricPrecision" fill="#f0f0f0" stroke="none" xml:space="preserve">135</text>
<path d="M819,429.5 H855 M819,441.5 H855" stroke="#00ffff"/>
<text transform="translate(821,439) scale(1.05,0.97)" font-size="10" text-rendering="geometricPrecision" fill="#f0f0f0" stroke="none" xml:space="preserve">105</text>
<path d="M860,429.5 H896 M860,441.5 H896" stroke="#00ffff"/>
<text transform="translate(862,439) scale(1.05,0.97)" font-size="10" text-rendering="geometricPrecision" fill="#f0f0f0" stroke="none" xml:space="preserve">75</text>
<path d="M901,429.5 H993 M901,441.5 H993" stroke="#00ffff"/>
<text transform="translate(903,439) scale(1.05,0.97)" font-size="10" text-rendering="geometricPrecision" fill="#f0f0f0" stroke="none" xml:space="preserve">0</text>
<path d="M529,429.5 L530.5,432 L532.5,439 L534,441.5 M534,429.5 L532.5,432 L530.5,439 L529,441.5" stroke="#00ffff"/>
<path d="M570,429.5 L571.5,432 L573.5,439 L575,441.5 M575,429.5 L573.5,432 L571.5,439 L570,441.5" stroke="#00ffff"/>
<path d="M611,429.5 L612.5,432 L614.5,439 L616,441.5 M616,429.5 L614.5,432 L612.5,439 L611,441.5" stroke="#00ffff"/>
<path d="M651,429.5 L652.5,432 L654.5,439 L656,441.5 M656,429.5 L654.5,432 L652.5,439 L651,441.5" stroke="#00ffff"/>
<path d="M773,429.5 L774.5,432 L776.5,439 L778,441.5 M778,429.5 L776.5,432 L774.5,439 L773,441.5" stroke="#00ffff"/>
<path d="M814,429.5 L815.5,432 L817.5,439 L819,441.5 M819,429.5 L817.5,432 L815.5,439 L814,441.5" stroke="#00ffff"/>
<path d="M855,429.5 L856.5,432 L858.5,439 L860,441.5 M860,429.5 L858.5,432 L856.5,439 L855,441.5" stroke="#00ffff"/>
<path d="M896,429.5 L897.5,432 L899.5,439 L901,441.5 M901,429.5 L899.5,432 L897.5,439 L896,441.5" stroke="#00ffff"/>
<path d="M309,446.5 H529 M309,458.5 H529" stroke="#00ffff"/>
<text transform="translate(313,456) scale(1.05,0.97)" font-size="10" text-rendering="geometricPrecision" fill="#f0f0f0" stroke="none" xml:space="preserve" letter-spacing="0.08">0 0 0 0 0</text>
<path d="M534,446.5 H570 M534,458.5 H570" stroke="#00ffff"/>
<path d="M575,446.5 H611 M575,458.5 H611" stroke="#00ffff"/>
<path d="M616,446.5 H651 M616,458.5 H651" stroke="#00ffff"/>
<path d="M656,446.5 H773 M656,458.5 H773" stroke="#00ffff"/>
<text transform="translate(658,456) scale(1.05,0.97)" font-size="10" text-rendering="geometricPrecision" fill="#f0f0f0" stroke="none" xml:space="preserve" letter-spacing="0.08">0 0 0 0 0</text>
<path d="M778,446.5 H814 M778,458.5 H814" stroke="#00ffff"/>
<path d="M819,446.5 H855 M819,458.5 H855" stroke="#00ffff"/>
<path d="M860,446.5 H896 M860,458.5 H896" stroke="#00ffff"/>
<path d="M901,446.5 H993 M901,458.5 H993" stroke="#00ffff"/>
<text transform="translate(903,456) scale(1.05,0.97)" font-size="10" text-rendering="geometricPrecision" fill="#f0f0f0" stroke="none" xml:space="preserve" letter-spacing="0.08">0 0 0 0 0</text>
<path d="M529,446.5 L530.5,449 L532.5,456 L534,458.5 M534,446.5 L532.5,449 L530.5,456 L529,458.5" stroke="#00ffff"/>
<path d="M570,446.5 L571.5,449 L573.5,456 L575,458.5 M575,446.5 L573.5,449 L571.5,456 L570,458.5" stroke="#00ffff"/>
<path d="M611,446.5 L612.5,449 L614.5,456 L616,458.5 M616,446.5 L614.5,449 L612.5,456 L611,458.5" stroke="#00ffff"/>
<path d="M651,446.5 L652.5,449 L654.5,456 L656,458.5 M656,446.5 L654.5,449 L652.5,456 L651,458.5" stroke="#00ffff"/>
<path d="M773,446.5 L774.5,449 L776.5,456 L778,458.5 M778,446.5 L776.5,449 L774.5,456 L773,458.5" stroke="#00ffff"/>
<path d="M814,446.5 L815.5,449 L817.5,456 L819,458.5 M819,446.5 L817.5,449 L815.5,456 L814,458.5" stroke="#00ffff"/>
<path d="M855,446.5 L856.5,449 L858.5,456 L860,458.5 M860,446.5 L858.5,449 L856.5,456 L855,458.5" stroke="#00ffff"/>
<path d="M896,446.5 L897.5,449 L899.5,456 L901,458.5 M901,446.5 L899.5,449 L897.5,456 L896,458.5" stroke="#00ffff"/>
<polyline points="309,475.5 531.5,475.5 531.5,463.5 572.5,463.5 572.5,475.5 775.5,475.5 775.5,463.5 816.5,463.5 816.5,475.5 993,475.5" stroke="#00ffff"/>
<polyline points="309,492.5 613.5,492.5 613.5,480.5 653.5,480.5 653.5,492.5 857.5,492.5 857.5,480.5 898.5,480.5 898.5,492.5 993,492.5" stroke="#ffff00"/>
<polyline points="309,509.5 531.5,509.5 531.5,497.5 572.5,497.5 572.5,509.5 993,509.5" stroke="#1e96ff"/>
<polyline points="309,526.5 857.5,526.5 857.5,514.5 898.5,514.5 898.5,526.5 993,526.5" stroke="#ff6633"/>
<polyline points="309,543.5 531.5,543.5 531.5,531.5 653.5,531.5 653.5,543.5 775.5,543.5 775.5,531.5 898.5,531.5 898.5,543.5 993,543.5" stroke="#6ccf1c"/>
</g>
</svg>
<div class="nm" style="left:22px;top:158px">CLpixel_in</div>
<div class="vl" style="top:158px">0</div>
<div class="nm" style="left:22px;top:175px">F_in</div>
<div class="vl" style="top:175px">0</div>
<div class="nm" style="left:22px;top:192px">L_in</div>
<div class="vl" style="top:192px">0</div>
<div class="nm" style="left:22px;top:209px">D_in</div>
<div class="vl" style="top:209px">0</div>
<div class="nm" style="left:22px;top:226px">CLpixel_out</div>
<div class="vl" style="top:226px">0</div>
<div class="nm" style="left:22px;top:243px">F_out</div>
<div class="vl" style="top:243px">0</div>
<div class="nm" style="left:22px;top:260px">L_out</div>
<div class="vl" style="top:260px">0</div>
<div class="nm" style="left:22px;top:277px">D_out</div>
<div class="vl" style="top:277px">0</div>
<div class="nm" style="left:12px;top:294px">Divider</div>
<div class="nm" style="left:22px;top:311px">VHTpixel_in</div>
<div class="vl" style="top:311px">0</div>
<div class="nm" style="left:22px;top:328px">VHTctrl_in</div>
<div class="vl" style="top:328px">0 0 0 0 0</div>
<div class="nm" style="left:34px;top:345px">(1)</div>
<div class="vl" style="top:345px">0</div>
<div class="nm" style="left:34px;top:362px">(2)</div>
<div class="vl" style="top:362px">0</div>
<div class="nm" style="left:34px;top:379px">(3)</div>
<div class="vl" style="top:379px">0</div>
<div class="nm" style="left:34px;top:396px">(4)</div>
<div class="vl" style="top:396px">0</div>
<div class="nm" style="left:34px;top:413px">(5)</div>
<div class="vl" style="top:413px">0</div>
<div class="nm" style="left:22px;top:430px">VHTpixel_out</div>
<div class="vl" style="top:430px">0</div>
<div class="nm" style="left:22px;top:447px">VHTctrl_out</div>
<div class="vl" style="top:447px">0 0 0 0 0</div>
<div class="nm" style="left:34px;top:464px">(1)</div>
<div class="vl" style="top:464px">0</div>
<div class="nm" style="left:34px;top:481px">(2)</div>
<div class="vl" style="top:481px">0</div>
<div class="nm" style="left:34px;top:498px">(3)</div>
<div class="vl" style="top:498px">0</div>
<div class="nm" style="left:34px;top:515px">(4)</div>
<div class="vl" style="top:515px">0</div>
<div class="nm" style="left:34px;top:532px">(5)</div>
<div class="vl" style="top:532px">0</div>
<div class="abs" style="left:981px;top:152px;width:12px;height:426px;background:rgba(255,255,255,0.5);border-radius:6px 6px 6px 6px"></div>
<div class="abs" style="left:981px;top:152px;width:12px;height:317px;background:#4d4d4d;border-radius:6px"></div>
<svg width="1001" height="637">
<g fill="none" stroke-width="1">
<path d="M11.5,329.5 h8 l-4,7.5 z" fill="#b4b4b4" stroke="none"/>
<path d="M15.5,341 V420.5" stroke="#9a9a9a"/>
<path d="M15,351.5 H27" stroke="#9a9a9a"/>
<path d="M15,368.5 H27" stroke="#9a9a9a"/>
<path d="M15,385.5 H27" stroke="#9a9a9a"/>
<path d="M15,402.5 H27" stroke="#9a9a9a"/>
<path d="M15,419.5 H27" stroke="#9a9a9a"/>
<path d="M11.5,448.5 h8 l-4,7.5 z" fill="#b4b4b4" stroke="none"/>
<path d="M15.5,460 V539.5" stroke="#9a9a9a"/>
<path d="M15,470.5 H27" stroke="#9a9a9a"/>
<path d="M15,487.5 H27" stroke="#9a9a9a"/>
<path d="M15,504.5 H27" stroke="#9a9a9a"/>
<path d="M15,521.5 H27" stroke="#9a9a9a"/>
<path d="M15,538.5 H27" stroke="#9a9a9a"/>
<path d="M208.5,152 V629" stroke="#888"/>
<path d="M308.5,152 V579 M308.5,599 V629" stroke="#888"/>
<path d="M8,579.5 H993" stroke="#8a8a8a"/>
</g>
<g font-family="Liberation Sans" font-size="10" font-weight="bold" fill="#e6e6e6" stroke="none">
<path d="M328.5,579 V583" stroke="#8c8c8c"/>
<text x="330.1" y="595.6" text-anchor="middle">6 s</text>
<path d="M409.5,579 V583" stroke="#8c8c8c"/>
<text x="411.1" y="595.6" text-anchor="middle">8 s</text>
<path d="M491.5,579 V583" stroke="#8c8c8c"/>
<text x="493.1" y="595.6" text-anchor="middle">10 s</text>
<path d="M572.5,579 V583" stroke="#8c8c8c"/>
<text x="574.1" y="595.6" text-anchor="middle">12 s</text>
<path d="M653.5,579 V583" stroke="#8c8c8c"/>
<text x="655.1" y="595.6" text-anchor="middle">14 s</text>
<path d="M735.5,579 V583" stroke="#8c8c8c"/>
<text x="737.1" y="595.6" text-anchor="middle">16 s</text>
<path d="M816.5,579 V583" stroke="#8c8c8c"/>
<text x="818.1" y="595.6" text-anchor="middle">18 s</text>
<path d="M898.5,579 V583" stroke="#8c8c8c"/>
<text x="900.1" y="595.6" text-anchor="middle">20 s</text>
<path d="M979.5,579 V583" stroke="#8c8c8c"/>
<text x="981.1" y="595.6" text-anchor="middle">22 s</text>
<path d="M368.5,577 V580" stroke="#8c8c8c"/>
<path d="M450.5,577 V580" stroke="#8c8c8c"/>
<path d="M531.5,577 V580" stroke="#8c8c8c"/>
<path d="M613.5,577 V580" stroke="#8c8c8c"/>
<path d="M694.5,577 V580" stroke="#8c8c8c"/>
<path d="M775.5,577 V580" stroke="#8c8c8c"/>
<path d="M857.5,577 V580" stroke="#8c8c8c"/>
<path d="M938.5,577 V580" stroke="#8c8c8c"/>
</g>
</svg>
<div class="abs" style="left:100px;top:604px;width:103.4px;text-align:right;font-size:12px;font-weight:bold;color:#f4f400;transform:scaleX(0.92);transform-origin:right center">Cursor 1</div>
<div class="abs" style="left:250px;top:604px;width:55.6px;text-align:right;font-size:12px;font-weight:bold;color:#f4f400">0 s</div>
</body></html>
